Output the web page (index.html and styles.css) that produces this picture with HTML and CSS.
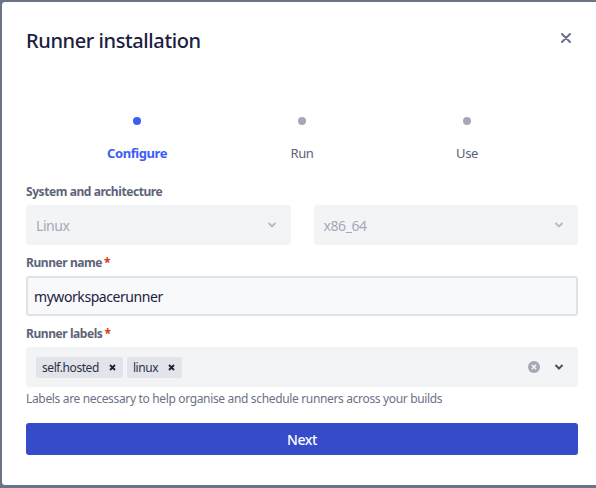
FILE: index.html
```html
<!DOCTYPE html>
<html>
<head>
<meta charset="utf-8">
<link rel="stylesheet" href="styles.css">
</head>
<body>
<div class="modal">
  <div class="header">
    <h1 class="title">Runner installation</h1>
    <button class="close" aria-label="Close">
      <svg width="10" height="10" viewBox="0 0 10 10"><path d="M1 1 L9 9 M9 1 L1 9" stroke="#6b7189" stroke-width="2" stroke-linecap="round"/></svg>
    </button>
  </div>
  <div class="steps">
    <div class="step active"><span class="dot"></span><span class="step-label">Configure</span></div>
    <div class="step"><span class="dot"></span><span class="step-label">Run</span></div>
    <div class="step"><span class="dot"></span><span class="step-label">Use</span></div>
  </div>
  <div class="field">
    <div class="label">System and architecture</div>
    <div class="row">
      <div class="select"><span>Linux</span><svg class="chev" width="10" height="6" viewBox="0 0 10 6"><path d="M1.5 1 L5 4.5 L8.5 1" fill="none" stroke="#b4b9c6" stroke-width="1.8"/></svg></div>
      <div class="select"><span>x86_64</span><svg class="chev" width="10" height="6" viewBox="0 0 10 6"><path d="M1.5 1 L5 4.5 L8.5 1" fill="none" stroke="#b4b9c6" stroke-width="1.8"/></svg></div>
    </div>
  </div>
  <div class="field">
    <div class="label">Runner name<span class="req">*</span></div>
    <div class="input">myworkspacerunner</div>
  </div>
  <div class="field">
    <div class="label">Runner labels<span class="req">*</span></div>
    <div class="multi">
      <div class="tags">
        <span class="tag">self.hosted<svg width="7" height="7" viewBox="0 0 7 7"><path d="M1 1 L6 6 M6 1 L1 6" stroke="#1d2233" stroke-width="1.8"/></svg></span>
        <span class="tag">linux<svg width="7" height="7" viewBox="0 0 7 7"><path d="M1 1 L6 6 M6 1 L1 6" stroke="#1d2233" stroke-width="1.8"/></svg></span>
      </div>
      <div class="indicators">
        <svg width="12" height="12" viewBox="0 0 12 12"><circle cx="6" cy="6" r="6" fill="#a3a8b6"/><path d="M3.8 3.8 L8.2 8.2 M8.2 3.8 L3.8 8.2" stroke="#f3f4f6" stroke-width="1.6"/></svg>
        <svg width="10" height="6" viewBox="0 0 10 6"><path d="M1.5 1 L5 4.5 L8.5 1" fill="none" stroke="#4a5068" stroke-width="2"/></svg>
      </div>
    </div>
    <div class="help">Labels are necessary to help organise and schedule runners across your builds</div>
  </div>
  <button class="next">Next</button>
</div>
</body>
</html>
```
FILE: styles.css
```css
html, body {
  margin: 0;
  padding: 0;
}
body {
  background: #6d7386;
  font-family: "Noto Sans", "Open Sans", sans-serif;
  letter-spacing: -0.43px;
  width: 596px;
  height: 488px;
  overflow: hidden;
  box-sizing: border-box;
  padding: 2px 0 3px 2px;
}
.modal {
  background: #fff;
  height: 483px;
  width: 620px;
  box-sizing: border-box;
  padding: 0 44px 0 24px;
  border-radius: 3px;
}
.header {
  display: flex;
  justify-content: space-between;
  align-items: center;
  height: 76px;
}
.title {
  margin: 0;
  font-size: 20px;
  font-weight: 500;
  color: #1b2140;
  letter-spacing: -0.4px;
}
.close {
  background: none;
  border: 0;
  padding: 0;
  margin: 0 6px 4px 0;
  width: 12px;
  height: 12px;
  display: flex;
  align-items: center;
  justify-content: center;
}
.steps {
  display: flex;
  justify-content: center;
  padding-top: 39px;
  box-sizing: border-box;
  height: 106px;
}
.step {
  width: 165px;
  display: flex;
  flex-direction: column;
  align-items: center;
}
.dot {
  width: 8px;
  height: 8px;
  border-radius: 50%;
  background: #a4a8b6;
}
.step-label {
  margin-top: 19px;
  font-size: 13px;
  color: #5a6179;
}
.step.active .dot { background: #3d5cf5; }
.step.active .step-label { color: #3d5cf5; font-weight: 700; }
.field { margin-bottom: 10px; }
.label {
  font-size: 12px;
  font-weight: 700;
  color: #5d6478;
  margin-bottom: 5px;
  line-height: 16px;
}
.req { color: #de350b; margin-left: 2px; }
.row {
  display: flex;
  gap: 23px;
}
.select {
  flex: 1;
  height: 40px;
  background: #f3f4f6;
  border-radius: 3px;
  display: flex;
  align-items: center;
  justify-content: space-between;
  padding: 0 14px 0 10px;
  font-size: 14px;
  color: #a4a9b8;
}
.input {
  height: 40px;
  box-sizing: border-box;
  border: 2px solid #e0e2e8;
  background: #f8f9fb;
  border-radius: 3px;
  font-size: 14px;
  color: #1b2140;
  display: flex;
  align-items: center;
  padding-left: 6px;
}
.multi {
  height: 40px;
  background: #f3f4f6;
  border-radius: 3px;
  display: flex;
  align-items: center;
  justify-content: space-between;
  padding: 0 14px 0 10px;
}
.tags { display: flex; gap: 4px; }
.tag {
  display: inline-flex;
  align-items: center;
  gap: 10px;
  height: 21px;
  padding: 0 7px 0 6px;
  background: #e2e4e9;
  border-radius: 2px;
  font-size: 12px;
  color: #2b3148;
}
.indicators { display: flex; align-items: center; gap: 14px; }
.help {
  font-size: 12px;
  line-height: 16px;
  color: #6b7186;
  margin-top: 4px;
  letter-spacing: -0.34px;
}
.next {
  display: block;
  width: 100%;
  height: 32px;
  margin-top: 16px;
  background: #364bca;
  border: 0;
  border-radius: 3px;
  color: #fff;
  font-family: inherit;
  letter-spacing: inherit;
  font-size: 14px;
  font-weight: 500;
}
```
